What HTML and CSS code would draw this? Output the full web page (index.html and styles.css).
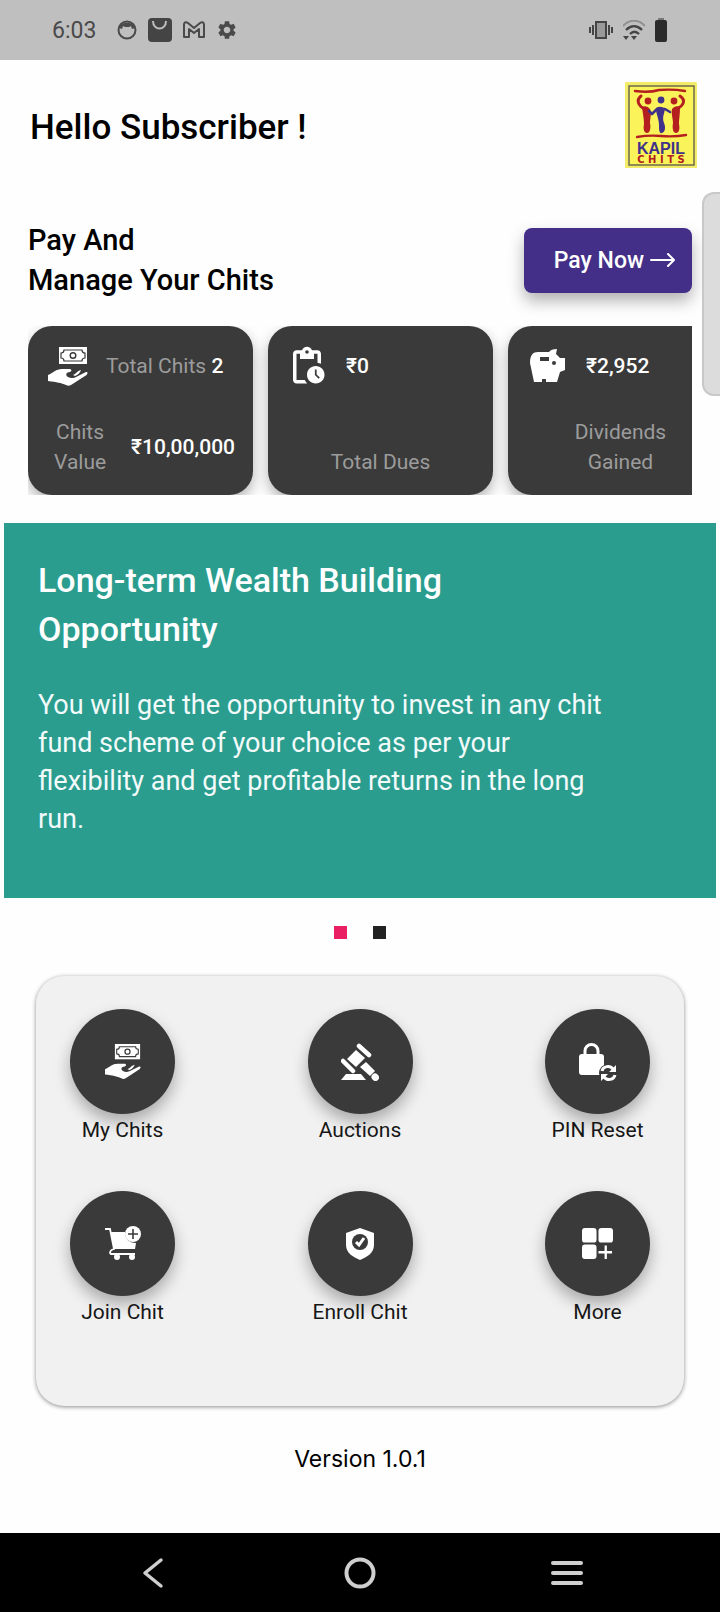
FILE: index.html
```html
<!DOCTYPE html>
<html lang="en">
<head>
    <meta charset="UTF-8">
    <meta name="viewport" content="width=device-width, initial-scale=1.0">
    <title>Kapil Chits</title>
    <link rel="stylesheet" href="styles.css">
</head>
<body>

<!-- Shared icon, used in the summary card and in the menu -->
<svg class="defs" width="0" height="0" aria-hidden="true">
    <symbol id="icon-money" viewBox="0 0 40 40">
        <rect x="11" y="0" width="28" height="17" fill="#fff"/>
        <path d="M16 3h18q0 3 3 3v5q-3 0-3 3H16q0-3-3-3V6q3 0 3-3z" fill="#fff" stroke="#3a3a3a" stroke-width="1.2"/>
        <circle cx="25" cy="8.5" r="2.8" fill="#fff" stroke="#3a3a3a" stroke-width="1.4"/>
        <path d="M0 28c5-2 8-6 14-6h7c3 0 3 2 1 3-4 0-5 3-2 5 3 2 7 1 10-1l8-4c3 0 1 3-1 4L23 38c-2 1-3 1-5 0-5-2-9-3-18-4z" fill="#fff"/>
        <path d="M25 28c3-1 4-4 8-5-1 3-3 5-6 6z" fill="#fff"/>
    </symbol>
</svg>

<div class="status-bar">
    <span class="time">6:03</span>
    <div class="status-left">
        <svg width="20" height="20" viewBox="0 0 20 20">
            <circle cx="10" cy="10" r="8.5" fill="none" stroke="#4a4a4a" stroke-width="2"/>
            <path d="M2 8c2-7 14-7 16 0l-3 1-1-3-2 1H8L6 6 5 9z" fill="#4a4a4a"/>
        </svg>
        <svg width="24" height="24" viewBox="0 0 24 24">
            <rect x="0" y="0" width="24" height="24" rx="4" fill="#444"/>
            <path d="M5 3c0 10 13 10 13 0" fill="none" stroke="#bebebe" stroke-width="2"/>
        </svg>
        <svg width="22" height="18" viewBox="0 0 22 18">
            <path d="M1 16V3q1-3 4-1l6 5 6-5q3-2 4 1v13h-5V8l-5 4-5-4v8z" fill="none" stroke="#4a4a4a" stroke-width="2" stroke-linejoin="round"/>
        </svg>
        <svg width="22" height="22" viewBox="0 0 24 24">
            <path fill="#4a4a4a" d="M19.14 12.94c.04-.3.06-.61.06-.94 0-.32-.02-.64-.07-.94l2.03-1.58c.18-.14.23-.41.12-.61l-1.92-3.32c-.12-.22-.37-.29-.59-.22l-2.39.96c-.5-.38-1.03-.7-1.62-.94L14.4 2.81c-.04-.24-.24-.41-.48-.41h-3.84c-.24 0-.43.17-.47.41L9.25 5.35C8.66 5.59 8.12 5.92 7.63 6.29L5.24 5.33c-.22-.08-.47 0-.59.22L2.74 8.87c-.12.21-.08.47.12.61l2.03 1.58c-.05.3-.09.63-.09.94s.02.64.07.94l-2.03 1.58c-.18.14-.23.41-.12.61l1.92 3.32c.12.22.37.29.59.22l2.39-.96c.5.38 1.03.7 1.62.94l.36 2.54c.05.24.24.41.48.41h3.84c.24 0 .44-.17.47-.41l.36-2.54c.59-.24 1.13-.56 1.62-.94l2.39.96c.22.08.47 0 .59-.22l1.92-3.32c.12-.22.07-.47-.12-.61l-2.01-1.58zM12 15.6c-1.98 0-3.6-1.62-3.6-3.6s1.62-3.6 3.6-3.6 3.6 1.62 3.6 3.6-1.62 3.6-3.6 3.6z"/>
        </svg>
    </div>
    <div class="status-right">
        <svg width="24" height="18" viewBox="0 0 24 18">
            <rect x="7" y="1" width="10" height="16" fill="#999" stroke="#444" stroke-width="2"/>
            <path d="M4 4v10M1 6v6M20 4v10M23 6v6" stroke="#444" stroke-width="2"/>
        </svg>
        <svg width="22" height="20" viewBox="0 0 22 20">
            <path d="M0 6C6-1 16-1 22 6" fill="none" stroke="#909090" stroke-width="2"/>
            <path d="M3 10c5-5 11-5 16 0M7 14c3-3 6-3 9 0" fill="none" stroke="#444" stroke-width="2.4"/>
            <path d="M0 16h6l-3 4zM8 16h6l-3 4z" fill="#444"/>
        </svg>
        <svg width="12" height="24" viewBox="0 0 12 24">
            <path d="M3 0h6v2H3z" fill="#777"/>
            <rect x="0" y="2" width="12" height="22" rx="2" fill="#2b2b2b"/>
        </svg>
    </div>
</div>

<header class="header">
    <h1>Hello Subscriber !</h1>
    <svg class="logo" width="72" height="86" viewBox="0 0 72 86" role="img" aria-label="Kapil Chits">
        <rect width="72" height="86" rx="1" fill="#f3ec6a"/>
        <rect x="4" y="4" width="65" height="79" fill="#fbf35a" stroke="#6d6a4e" stroke-width="1.5"/>
        <path d="M10 9q14 2 24-1 14-1 26 1M12 55q12-2 24-1 14 1 25-1" fill="none" stroke="#b3201f" stroke-width="2.4" stroke-linecap="round"/>
        <g fill="none" stroke="#b3201f" stroke-width="3" stroke-linecap="round" stroke-linejoin="round">
            <path d="M16 14c-5 4-3 10 4 13M55 14c6 4 4 10-4 13"/>
        </g>
        <g fill="#b3201f">
            <circle cx="23" cy="19" r="3.4"/>
            <path d="M17 25q5-2 8 2c2 5 0 9 0 14 1 5 0 10-3 10s-4-4-3-9c0-5-1-9-2-17z"/>
            <circle cx="49" cy="19" r="3.4"/>
            <path d="M55 25q-5-2-8 2c-1 5 1 9 1 14-1 5 0 10 3 10s4-4 3-9c0-5 1-9 1-17z"/>
        </g>
        <circle cx="36" cy="18" r="3.4" fill="#40318a"/>
        <path d="M24 29l3 3 5-5h8l5 3" fill="none" stroke="#40318a" stroke-width="2.6" stroke-linecap="round" stroke-linejoin="round"/>
        <path d="M31 26q5-3 9 1c-1 6-3 8-1 14 2 5 1 9-2 10s-3-4-3-8c0-7-3-10-3-17z" fill="#40318a"/>
        <text x="36" y="72" text-anchor="middle" font-family="Liberation Sans, sans-serif" font-weight="700" font-size="16" fill="#40318a">KAPIL</text>
        <text x="36" y="81" text-anchor="middle" font-family="DejaVu Sans, sans-serif" font-weight="700" font-size="10" fill="#b3201f">C H I T S</text>
    </svg>
</header>

<main>
    <section class="pay">
        <h2>Pay And<br>Manage Your Chits</h2>
        <button type="button" class="pay-btn">
            Pay Now
            <svg width="26" height="14" viewBox="0 0 26 14" aria-hidden="true">
                <path d="M1 7h23M18 1l6 6-6 6" fill="none" stroke="#fff" stroke-width="2" stroke-linecap="round" stroke-linejoin="round"/>
            </svg>
        </button>
    </section>

    <section class="cards">
        <div class="card">
            <div class="card-top">
                <svg class="card-icon" viewBox="-2 -2 42 42"><use href="#icon-money" width="40" height="40"/></svg>
                <p><span class="label">Total Chits</span> <span class="value">2</span></p>
            </div>
            <div class="card-bottom split">
                <p class="label narrow">Chits Value</p>
                <p class="value">₹10,00,000</p>
            </div>
        </div>
        <div class="card">
            <div class="card-top">
                <svg class="card-icon" viewBox="0 0 24 24">
                    <path fill="#fff" d="M17 12c-2.76 0-5 2.24-5 5s2.24 5 5 5 5-2.24 5-5-2.24-5-5-5zm1.65 7.35L16.5 17.2V14h1v2.79l1.85 1.85-.7.71zM18 3h-3.18C14.4 1.84 13.3 1 12 1s-2.4.84-2.82 2H6c-1.1 0-2 .9-2 2v15c0 1.1.9 2 2 2h6.11c-.59-.57-1.07-1.25-1.42-2H6V5h2v3h8V5h2v5.08c.71.1 1.38.31 2 .6V5c0-1.1-.9-2-2-2zm-6 2c-.55 0-1-.45-1-1s.45-1 1-1 1 .45 1 1-.45 1-1 1z"/>
                </svg>
                <p class="value">₹0</p>
            </div>
            <div class="card-bottom">
                <p class="label">Total Dues</p>
            </div>
        </div>
        <div class="card">
            <div class="card-top">
                <svg class="card-icon" viewBox="0 0 42 42">
                    <path fill="#fff" fill-rule="evenodd" d="M12 7h11q2-3 8-3l-1 5 4 4h5v12l-5 2-3 10H20v-3h-4v3H8L4 18C4 10 7 7 12 7zM14 12v4h9v-4z"/>
                    <circle cx="28" cy="18" r="2" fill="#3a3a3a"/>
                </svg>
                <p class="value">₹2,952</p>
            </div>
            <div class="card-bottom">
                <p class="label narrow">Dividends Gained</p>
            </div>
        </div>
    </section>

    <section class="banner">
        <h2>Long-term Wealth Building<br>Opportunity</h2>
        <p>You will get the opportunity to invest in any chit<br>fund scheme of your choice as per your<br>flexibility and get profitable returns in the long<br>run.</p>
    </section>

    <div class="dots">
        <button type="button" class="dot active" aria-label="Slide 1"></button>
        <button type="button" class="dot" aria-label="Slide 2"></button>
    </div>

    <nav class="menu">
        <a href="#chits" class="menu-item">
            <span class="circle"><svg width="36" height="36"><use href="#icon-money"/></svg></span>
            My Chits
        </a>
        <a href="#auctions" class="menu-item">
            <span class="circle">
                <svg width="38" height="38" viewBox="0 0 38 38">
                    <g stroke="#fff" stroke-linecap="round" fill="none">
                        <path d="M18 3l10 9M2 18l10 10" stroke-width="4.5"/>
                        <path d="M34 34l.5.5" stroke-width="7"/>
                    </g>
                    <path d="M15 7l9 8-9 9-9-8z" fill="#fff"/>
                    <path d="M19 24l6-5 9 9-5 5z" fill="#fff"/>
                    <path d="M0 37l5-6h15l5 6z" fill="#fff"/>
                </svg>
            </span>
            Auctions
        </a>
        <a href="#pin" class="menu-item">
            <span class="circle">
                <svg width="38" height="38" viewBox="2 0 38 38">
                    <path d="M8 13V8a6 6 0 0 1 13 0v5" fill="none" stroke="#fff" stroke-width="3"/>
                    <rect x="2" y="11" width="25" height="21" rx="3" fill="#fff"/>
                    <circle cx="31" cy="30" r="9" fill="#3a3a3a"/>
                    <path d="M25 28c1-5 8-6 11-2M38 32c-1 5-8 6-11 2" fill="none" stroke="#fff" stroke-width="3"/>
                    <path d="M39 22v7h-7zM24 38v-7h7z" fill="#fff"/>
                </svg>
            </span>
            PIN Reset
        </a>
        <a href="#join" class="menu-item">
            <span class="circle">
                <svg width="36" height="36" viewBox="0 0 36 36">
                    <path d="M0 3h5l4 20q-4 1-4 4l1 1h24" fill="none" stroke="#fff" stroke-width="1.8"/>
                    <path d="M6 6h14c0 7 4 11 11 11l-1 6H9z" fill="#fff"/>
                    <circle cx="28" cy="8" r="8" fill="#fff"/>
                    <path d="M28 3v10M23 8h10" stroke="#3a3a3a" stroke-width="1.6"/>
                    <circle cx="12" cy="31" r="3" fill="#fff"/>
                    <circle cx="27" cy="31" r="3" fill="#fff"/>
                </svg>
            </span>
            Join Chit
        </a>
        <a href="#enroll" class="menu-item">
            <span class="circle">
                <svg width="30" height="32" viewBox="0 0 30 32">
                    <path d="M15 0l14 5v12c0 8-7 12-14 15C8 29 1 25 1 17V5z" fill="#fff"/>
                    <circle cx="15" cy="14" r="8" fill="#3a3a3a"/>
                    <path d="M11 14l3 3 5-7" fill="none" stroke="#fff" stroke-width="3"/>
                </svg>
            </span>
            Enroll Chit
        </a>
        <a href="#more" class="menu-item">
            <span class="circle">
                <svg width="31" height="31" viewBox="0 0 32 32">
                    <g fill="#fff">
                        <rect x="0" y="0" width="15" height="15" rx="3"/>
                        <rect x="17" y="0" width="15" height="15" rx="3"/>
                        <rect x="0" y="17" width="15" height="15" rx="3"/>
                    </g>
                    <path d="M24.5 18v14M17 25h14" stroke="#fff" stroke-width="2.4"/>
                </svg>
            </span>
            More
        </a>
    </nav>

    <p class="version">Version 1.0.1</p>
</main>

<footer class="nav-bar">
    <button type="button" aria-label="Back">
        <svg width="34" height="34" viewBox="0 0 34 34"><path d="M25 4L9 17l16 13" fill="none" stroke="#cfcfcf" stroke-width="3.5" stroke-linecap="round" stroke-linejoin="round"/></svg>
    </button>
    <button type="button" aria-label="Home">
        <svg width="34" height="34" viewBox="0 0 34 34"><circle cx="17" cy="17" r="13.5" fill="none" stroke="#cfcfcf" stroke-width="4"/></svg>
    </button>
    <button type="button" aria-label="Menu">
        <svg width="34" height="34" viewBox="0 0 34 34"><path d="M3 7h28M3 17h28M3 27h28" stroke="#cfcfcf" stroke-width="4" stroke-linecap="round"/></svg>
    </button>
</footer>

<div class="edge-handle"></div>

</body>
</html>
```

FILE: styles.css
```css
* {
    box-sizing: border-box;
}
body {
    margin: 0;
    min-height: 100vh;
    display: flex;
    flex-direction: column;
    position: relative;
    overflow-x: hidden;
    font-family: Roboto, sans-serif;
    background-color: #fefefe;
    color: #000;
}
h1, h2, p {
    margin: 0;
}
button {
    font-family: inherit;
    border: none;
    padding: 0;
    cursor: pointer;
}
svg {
    display: block;
    flex-shrink: 0;
}
.defs {
    position: absolute;
}

/* Status bar */
.status-bar {
    height: 60px;
    padding: 0 53px 0 52px;
    display: flex;
    align-items: center;
    background-color: #bfbfbf;
    color: #4a4a4a;
}
.time {
    font-size: 23px;
}
.status-left,
.status-right {
    display: flex;
    align-items: center;
    gap: 11px;
}
.status-left {
    margin-left: 21px;
}
.status-right {
    margin-left: auto;
    gap: 10px;
}

/* Greeting and logo */
.header {
    display: flex;
    align-items: center;
    justify-content: space-between;
    padding: 22px 23px 0 30px;
}
h1 {
    padding-top: 4px;
    font-size: 35px;
    font-weight: 500;
}

/* Pay section */
.pay {
    display: flex;
    align-items: center;
    justify-content: space-between;
    margin: 52px 28px 26px;
}
.pay h2 {
    font-size: 29px;
    line-height: 40px;
    font-weight: 500;
}
.pay-btn {
    display: flex;
    align-items: center;
    gap: 6px;
    height: 65px;
    padding: 0 16px 0 30px;
    border-radius: 8px;
    background-color: #432f87;
    color: #fff;
    font-size: 23px;
    font-weight: 500;
    box-shadow: 0 8px 16px rgba(0, 0, 0, 0.3);
}

/* Summary cards, cut off at the right side */
.cards {
    display: flex;
    gap: 15px;
    margin: 0 28px;
    overflow: hidden;
}
.card {
    flex: 0 0 225px;
    height: 169px;
    padding: 19px 18px 18px;
    display: flex;
    flex-direction: column;
    justify-content: space-between;
    border-radius: 24px;
    background-color: #3a3a3a;
    font-size: 21px;
    line-height: 30px;
    box-shadow: 0 6px 14px rgba(0, 0, 0, 0.3);
}
.card-top {
    display: flex;
    align-items: center;
    gap: 18px;
    white-space: nowrap;
}
.card-icon {
    width: 42px;
    height: 42px;
}
.card-bottom {
    display: flex;
    align-items: center;
    justify-content: center;
    text-align: center;
}
.split {
    justify-content: space-between;
    padding-left: 8px;
}
.label {
    color: #9c9c9c;
}
.narrow {
    width: min-content;
}
.value {
    color: #fff;
    font-weight: 500;
}

/* Banner */
.banner {
    margin: 28px 4px 0;
    padding: 33px 34px 60px;
    background-color: #2a9d8f;
    color: #fff;
}
.banner h2 {
    font-size: 34px;
    line-height: 49px;
    font-weight: 500;
}
.banner p {
    margin-top: 32px;
    font-size: 27px;
    line-height: 38px;
    color: #f2fafa;
}
.dots {
    display: flex;
    justify-content: center;
    gap: 26px;
    margin: 28px 0 37px;
}
.dot {
    width: 13px;
    height: 13px;
    background-color: #222;
}
.dot.active {
    background-color: #e91e63;
}

/* Menu */
.menu {
    display: grid;
    grid-template-columns: repeat(3, 105px);
    justify-content: space-between;
    row-gap: 46px;
    margin: 0 36px;
    padding: 33px 34px 79px;
    border-radius: 28px;
    background-color: #f1f1f1;
    box-shadow: 0 1px 4px rgba(0, 0, 0, 0.45);
}
.menu-item {
    display: flex;
    flex-direction: column;
    align-items: center;
    gap: 1px;
    color: #161616;
    font-size: 21px;
    line-height: 30px;
    text-decoration: none;
    white-space: nowrap;
}
.circle {
    display: flex;
    align-items: center;
    justify-content: center;
    width: 105px;
    height: 105px;
    border-radius: 50%;
    background-color: #3a3a3a;
    box-shadow: 0 8px 16px rgba(0, 0, 0, 0.3);
}
.version {
    margin: 38px 0;
    text-align: center;
    font-family: Inter, sans-serif;
    font-size: 23px;
    line-height: 30px;
}

/* Bottom navigation bar */
.nav-bar {
    display: flex;
    align-items: center;
    justify-content: space-between;
    height: 79px;
    margin-top: auto;
    padding: 0 136px;
    background-color: #000;
}
.nav-bar button {
    background: none;
}

/* Handle lying over the right edge of the screen */
.edge-handle {
    position: absolute;
    top: 192px;
    right: 0;
    width: 18px;
    height: 204px;
    border: 2px solid #c8c8c8;
    border-right: none;
    border-radius: 12px 0 0 12px;
    background-color: #dcdcdc;
}
```
